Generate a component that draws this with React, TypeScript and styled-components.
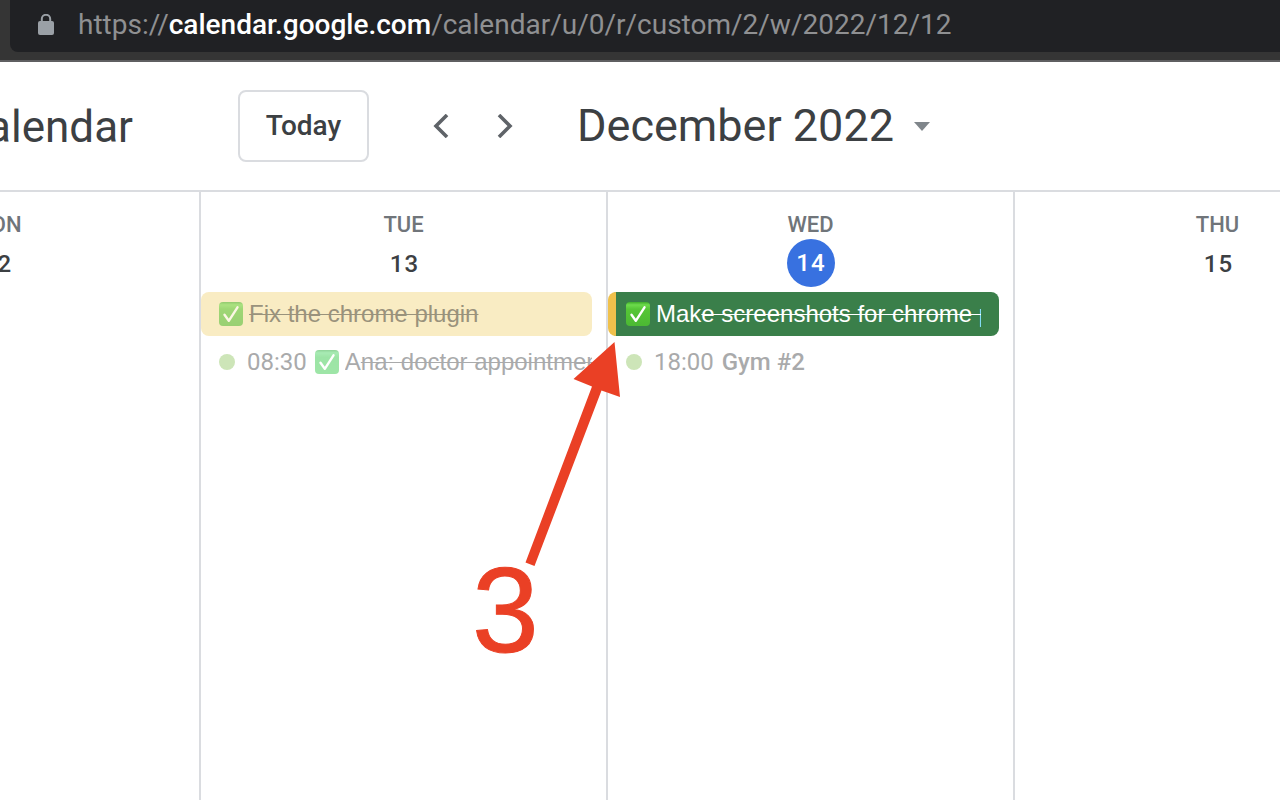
import React from "react";
import styled, { createGlobalStyle } from "styled-components";

const Global = createGlobalStyle`
  * { box-sizing: border-box; }
  html, body, #root { height: 100%; }
  body { margin: 0; background: #fff; font-family: Roboto, "Liberation Sans", sans-serif; overflow: hidden; }
`;

const Page = styled.div`
  display: flex;
  flex-direction: column;
  min-height: 100%;
  overflow: hidden;
`;

const BrowserBar = styled.div`
  background: #353535;
  border-bottom: 2px solid #5f5f61;
  padding: 0 0 8px 10px;
`;

const AddressBox = styled.div`
  display: flex;
  align-items: center;
  gap: 24px;
  height: 52px;
  padding: 0 0 2px 28px;
  background: #202124;
  border-bottom-left-radius: 8px;
`;

const Url = styled.a`
  color: #8f9092;
  font-size: 28px;
  line-height: 36px;
  text-decoration: none;
  white-space: nowrap;
`;

const Host = styled.span`
  color: #fff;
  font-weight: 500;
`;

const Toolbar = styled.header`
  display: flex;
  align-items: center;
  height: 130px;
  border-bottom: 2px solid #dadce0;
  color: #3c4043;
`;

const Brand = styled.div`
  display: flex;
  justify-content: flex-end;
  width: 133px;
  margin-right: 105px;
  padding-top: 2px;
  font-size: 44px;
  line-height: 52px;
`;

const TodayButton = styled.button`
  height: 72px;
  width: 131px;
  border: 2px solid #dadce0;
  border-radius: 8px;
  background: #fff;
  color: #3c4043;
  font: 500 28px/36px Roboto, sans-serif;
  padding: 0;
`;

const Pager = styled.div`
  display: flex;
  margin: 0 40px;
`;

const IconButton = styled.button`
  display: grid;
  place-items: center;
  width: 64px;
  height: 64px;
  padding: 0;
  border: 0;
  background: none;
  color: #5f6368;
`;

const PeriodButton = styled.button`
  display: flex;
  align-items: center;
  gap: 20px;
  padding: 0;
  border: 0;
  background: none;
  color: #3c4043;
  font: 400 45px/52px Roboto, sans-serif;
  white-space: nowrap;
`;

const Week = styled.main`
  flex: 1;
  display: grid;
  grid-template-columns: repeat(4, minmax(407px, 1fr));
  margin-left: -208px;
`;

const Day = styled.section`
  border-left: 2px solid #dadce0;
  padding-top: 19px;
  min-width: 0;
`;

const DayHead = styled.h2`
  display: flex;
  flex-direction: column;
  align-items: center;
  gap: 1px;
  margin: 0 0 5px;
  color: #70757a;
  font-size: 22px;
  font-weight: 500;
  line-height: 27px;
`;

const DayNumber = styled.span<{ $today?: boolean }>`
  display: grid;
  place-items: center;
  width: 48px;
  height: 48px;
  padding: ${(p) => (p.$today ? "0 0 0 1px" : "2px 0 0 2px")};
  border-radius: 50%;
  background: ${(p) => (p.$today ? "#3871e0" : "transparent")};
  color: ${(p) => (p.$today ? "#fff" : "#3c4043")};
  font-size: 24px;
  letter-spacing: 1px;
`;

const Events = styled.ul`
  display: flex;
  flex-direction: column;
  gap: 4px;
  margin: 0;
  padding: 0 14px 0 0;
  list-style: none;
`;

const AllDay = styled.li<{ $active?: boolean }>`
  display: flex;
  align-items: center;
  gap: 6px;
  height: 44px;
  padding: 0 18px 0 ${(p) => (p.$active ? "10px" : "18px")};
  border-left: ${(p) => (p.$active ? "8px solid #f0c14c" : "0")};
  border-radius: 8px;
  background: ${(p) => (p.$active ? "#3a7f4a" : "#f9ecc3")};
  color: ${(p) => (p.$active ? "#fff" : "#99927c")};
`;

const Timed = styled.li`
  display: flex;
  align-items: center;
  height: 44px;
  padding-left: 18px;
  color: #a9aaab;
  font-size: 24px;
  white-space: nowrap;
  overflow: hidden;
`;

const Dot = styled.span`
  flex: none;
  width: 16px;
  height: 16px;
  margin-right: 12px;
  border-radius: 50%;
  background: #cde5b8;
`;

const Time = styled.time`
  margin-right: 8px;
`;

const Title = styled.span`
  font-weight: 500;
`;

const DoneTitle = styled.span`
  flex: 1;
  min-width: 0;
  overflow: hidden;
  font-family: "Liberation Sans", Arial, sans-serif;
  font-size: 24px;
  line-height: 32px;
  white-space: nowrap;
`;

const Struck = styled.s`
  text-decoration-thickness: 1px;
`;

const CheckSvg = styled.svg<{ $faded?: boolean }>`
  flex: none;
  opacity: ${(p) => (p.$faded ? 0.55 : 1)};
`;

const TimedCheck = styled.span`
  display: flex;
  margin-right: 6px;
`;

const Annotation = styled.div`
  position: absolute;
  left: 470px;
  top: 340px;
  color: #ea4025;
  pointer-events: none;
`;

const Arrow = styled.svg`
  display: block;
`;

const Step = styled.div`
  padding-left: 2px;
  font: 120px/84px "Liberation Sans", Arial, sans-serif;
  -webkit-text-stroke: 1px currentColor;
`;

function Check({ faded, mint }: { faded?: boolean; mint?: boolean }) {
  const id = mint ? "check-mint" : "check-green";
  return (
    <CheckSvg width="24" height="24" viewBox="0 0 24 24" $faded={faded} role="img" aria-label="Done">
      <defs>
        <linearGradient id={id} x1="0" y1="0" x2="0" y2="1">
          <stop offset="0" stopColor={mint ? "#35b045" : "#3fae2a"} />
          <stop offset="0.12" stopColor={mint ? "#62dc78" : "#6ddb4c"} />
          <stop offset="0.3" stopColor={mint ? "#4dcf5e" : "#55c636"} />
          <stop offset="1" stopColor={mint ? "#4fd160" : "#4cb933"} />
        </linearGradient>
      </defs>
      <rect width="24" height="24" rx="4" fill={`url(#${id})`} />
      <path d="M5.500 12.800 9.800 18.800 18.500 5.300" fill="none" stroke="#fff" strokeWidth="2.4" strokeLinecap="round" strokeLinejoin="round" />
    </CheckSvg>
  );
}

export default function App() {
  return (
    <Page>
      <Global />
      <BrowserBar>
        <AddressBox>
          <svg width="16" height="22" viewBox="0 0 16 22" aria-hidden="true">
            <path d="M3.800 8V5a4.200 4.200 0 0 1 8.400 0v3" fill="none" stroke="#9aa0a6" strokeWidth="2" />
            <rect y="7" width="16" height="14" rx="2" fill="#9aa0a6" />
          </svg>
          <Url href="https://calendar.google.com/calendar/u/0/r/custom/2/w/2022/12/12">
            https://<Host>calendar.google.com</Host>/calendar/u/0/r/custom/2/w/2022/12/12
          </Url>
        </AddressBox>
      </BrowserBar>
      <Toolbar>
        <Brand>Calendar</Brand>
        <TodayButton>Today</TodayButton>
        <Pager>
          <IconButton aria-label="Previous period">
            <svg width="16" height="24" viewBox="0 0 16 24"><path d="M14 1 3 12l11 11" fill="none" stroke="currentColor" strokeWidth="3.6" /></svg>
          </IconButton>
          <IconButton aria-label="Next period">
            <svg width="16" height="24" viewBox="0 0 16 24"><path d="M2 1l11 11L2 23" fill="none" stroke="currentColor" strokeWidth="3.6" /></svg>
          </IconButton>
        </Pager>
        <PeriodButton>
          December 2022
          <svg width="16" height="9" viewBox="0 0 16 9" aria-hidden="true"><path d="M0 0h16L8 9z" fill="#80868b" /></svg>
        </PeriodButton>
      </Toolbar>
      <Week>
        <Day>
          <DayHead>MON<DayNumber>12</DayNumber></DayHead>
        </Day>
        <Day>
          <DayHead>TUE<DayNumber>13</DayNumber></DayHead>
          <Events>
            <AllDay><Check faded /><DoneTitle><Struck>Fix the chrome plugin</Struck></DoneTitle></AllDay>
            <Timed>
              <Dot /><Time>08:30</Time><TimedCheck><Check faded mint /></TimedCheck>
              <DoneTitle>A<Struck>na: doctor appointment</Struck></DoneTitle>
            </Timed>
          </Events>
        </Day>
        <Day>
          <DayHead>WED<DayNumber $today>14</DayNumber></DayHead>
          <Events>
            <AllDay $active><Check /><DoneTitle>Mak<Struck>e screenshots for chrome plugin</Struck></DoneTitle></AllDay>
            <Timed><Dot /><Time>18:00</Time><Title>Gym #2</Title></Timed>
          </Events>
        </Day>
        <Day>
          <DayHead>THU<DayNumber>15</DayNumber></DayHead>
        </Day>
      </Week>
      <Annotation>
        <Arrow width="160" height="228" viewBox="0 0 160 228" aria-hidden="true">
          <path d="M144.500 2 150 57 131.500 50.500 64.500 226 55.500 222.500 122 46.500 103.500 39z" fill="currentColor" />
        </Arrow>
        <Step>3</Step>
      </Annotation>
    </Page>
  );
}
